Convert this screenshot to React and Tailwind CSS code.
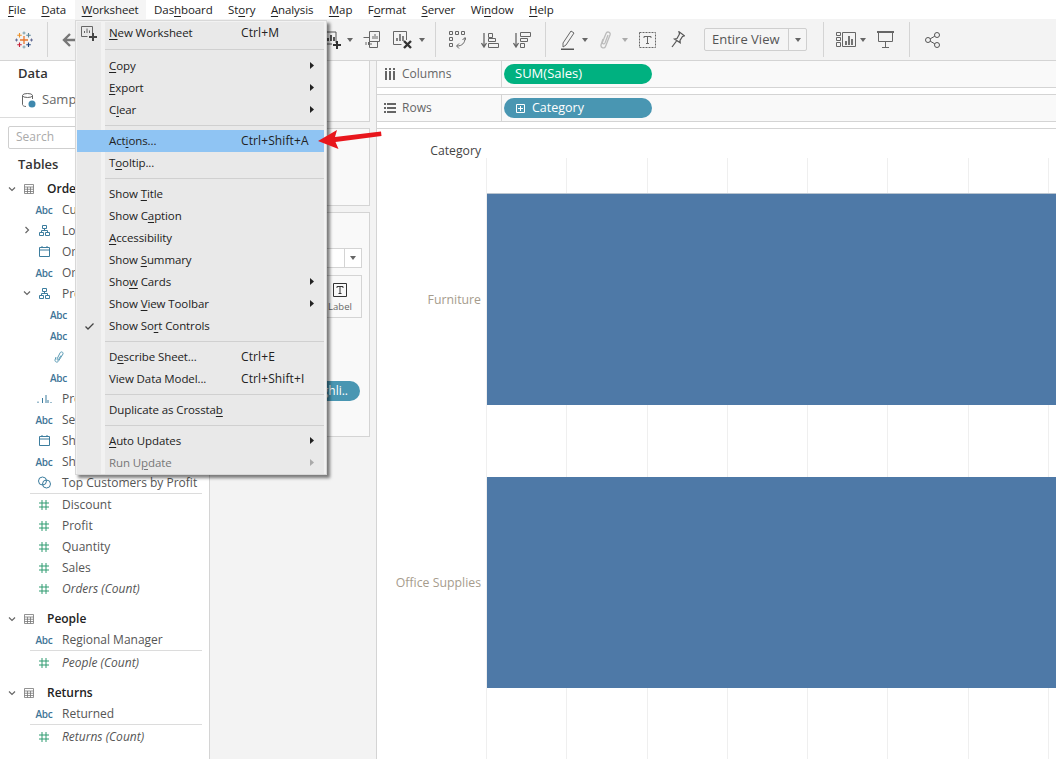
import React from 'react';

const menuBar = [
    ['F', 'ile'], ['D', 'ata'], ['W', 'orksheet'], ['Das', 'h', 'board'], ['St', 'o', 'ry'],
    ['A', 'nalysis'], ['M', 'ap'], ['F', 'o', 'rmat'], ['S', 'erver'], ['Wi', 'n', 'dow'], ['H', 'elp'],
];

// mnemonic text: [before, underlined, after]
const Mn = ({ a = '', u, b = '' }) => (
    <span>{a}<u className="underline-offset-2">{u}</u>{b}</span>
);

const Caret = ({ className }) => (
    <svg viewBox="0 0 6 4" className={`w-[6px] h-[4px] shrink-0 ${className}`}><path d="M0 0h6L3 4z" fill="#666" /></svg>
);

const Divider = ({ className }) => <div className={`w-px h-[35px] bg-[#d4d4d4] shrink-0 ${className}`} />;

const TableauLogo = () => (
    <svg viewBox="0 0 18 18" className="w-[18px] h-[18px] ml-[15px] shrink-0" fill="none" strokeWidth="1.1">
        <path d="M9 5v8M5 9h8" stroke="#e8762c" strokeWidth="1.3" />
        <path d="M13.5 2v4.500M11.250 4.250h4.500" stroke="#5b879b" />
        <path d="M4.500 2v4.500M2.250 4.250h4.500" stroke="#eb9129" />
        <path d="M4.500 11.500v4.500M2.250 13.750h4.500" stroke="#c72037" />
        <path d="M13.500 11.500v4.500M11.250 13.750h4.500" stroke="#1f457e" />
        <path d="M9 .5v3M7.500 2h3M9 14.500v3M7.500 16h3" stroke="#7099a6" strokeWidth="0.9" />
        <path d="M1.500 7.500v3M0 9h3M16.500 7.500v3M15 9h3" stroke="#5b6591" strokeWidth="0.9" />
    </svg>
);

const Toolbar = () => (
    <div className="h-[42px] bg-[#f3f3f3] border-b border-[#d4d4d4] flex items-center shrink-0">
        <TableauLogo />
        <Divider className="ml-[14px]" />
        <svg viewBox="0 0 14 14" className="w-[14px] h-[14px] ml-[14px] shrink-0" fill="none" stroke="#777" strokeWidth="2.4"><path d="M14 7H2M8 1L2 7l6 6" /></svg>
        <svg viewBox="0 0 18 18" className="w-[18px] h-[18px] ml-[247px] shrink-0" fill="none" stroke="#555"><path d="M13 12V1H1v12h8" /><path d="M5 10V7M8 10V4M11 10V6" strokeWidth="2" /><path d="M14 10v8M10 14h8" stroke="#333" strokeWidth="2" /></svg>
        <Caret className="ml-[6px]" />
        <svg viewBox="0 0 17 17" className="w-[17px] h-[17px] ml-[10px] shrink-0" fill="none" stroke="#666"><path d="M6.500.5h10v10h-10z" fill="#f3f3f3" /><path d="M10 8V5M12 8V3M14 8V5" /><path d="M.5 6.500h6v10h8v-6" /><path d="M3 14v-3M5.500 14v-3M8 14v-2" /></svg>
        <svg viewBox="0 0 19 18" className="w-[19px] h-[18px] ml-[13px] shrink-0" fill="none" stroke="#666"><path d="M13.500 9V.5H.5v13h8" /><path d="M4 10V7M7 10V3M10 10V5" strokeWidth="1.600" /><path d="M11 10l7 7M18 10l-7 7" stroke="#333" strokeWidth="2.400" /></svg>
        <Caret className="ml-[7px]" />
        <Divider className="ml-[10px]" />
        <svg viewBox="0 0 17 18" className="w-[17px] h-[18px] ml-[13px] shrink-0" fill="none" stroke="#666"><path d="M.5.5h3v3h-3zM6.500.5h3v3h-3zM12.500.5h3v3h-3zM.5 6.500h3v3h-3zM.5 12.500h3v3h-3z" /><path d="M16 7c0 5-3 8-8 8" /><path d="M10 12.500L7.500 15l2.500 2.500M13.500 9L16 6.500 17 9" /></svg>
        <svg viewBox="0 0 18 16" className="w-[18px] h-[16px] ml-[15px] shrink-0" fill="none" stroke="#666"><path d="M3 1v13M.5 11L3 15l2.500-4" strokeWidth="1.300" /><path d="M7.500 1.500h4v4h-4zM7.500 6.500h7v3h-7zM7.500 11.500h10v4h-10z" /></svg>
        <svg viewBox="0 0 18 16" className="w-[18px] h-[16px] ml-[14px] shrink-0" fill="none" stroke="#666"><path d="M3 1v13M.5 11L3 15l2.500-4" strokeWidth="1.300" /><path d="M7.500.5h10v4h-10zM7.500 6.500h7v3h-7zM7.500 11.500h4v4h-4z" /></svg>
        <Divider className="ml-[14px]" />
        <svg viewBox="0 0 16 20" className="w-[16px] h-[20px] ml-[15px] shrink-0" fill="none" stroke="#666"><path d="M2 13L10 1l3 2-8 12-3 2z" /><path d="M0 19.500h13" stroke="#555" strokeWidth="2" /></svg>
        <Caret className="ml-[5px]" />
        <svg viewBox="0 0 12 18" className="w-[12px] h-[18px] ml-[12px] shrink-0" fill="none" stroke="#bbb" strokeWidth="1.300"><path d="M3 8l-2 6c-.5 3 3.500 4 4.500 1.500L10 4c1-3-3-4-4-1.500L2.500 11c-.5 2 1.500 2.500 2.500 1l3-8" /></svg>
        <Caret className="ml-[10px] opacity-50" />
        <svg viewBox="0 0 17 16" className="w-[17px] h-[16px] ml-[11px] shrink-0" fill="none" stroke="#666"><path d="M.5.5h16v15H.5z" strokeDasharray="2 1" /><path d="M5 6V4.500h7V6M8.500 4.500v7M7 11.500h3" /></svg>
        <svg viewBox="0 0 14 17" className="w-[14px] h-[17px] ml-[15px] shrink-0" fill="none" stroke="#555" strokeWidth="1.200"><path d="M8 .8l5.500 4-2 .6-2.500 4 .2 2.400L3.500 8l2.500-.5L8.500 3z" /><path d="M5.500 10L1 16" /></svg>
        <div className="w-[103px] h-[23px] ml-[19px] flex border border-[#cfcfcf] rounded-[2px] bg-[#f5f5f5] shrink-0">
            <span className="flex-1 text-[13px] text-[#555] pl-[7px] leading-[21px]">Entire View</span>
            <span className="w-[18px] border-l border-[#cfcfcf] flex items-center justify-center"><Caret /></span>
        </div>
        <Divider className="ml-[16px]" />
        <svg viewBox="0 0 20 15" className="w-[20px] h-[15px] ml-[12px] shrink-0" fill="none" stroke="#666"><path d="M.5.5h4v3h-4zM.5 5.500h4v3h-4zM.5 10.500h4v4h-4zM6.500.5h13v14h-13z" /><path d="M10 13V9M13 13V4M16 13V7" strokeWidth="1.800" /></svg>
        <Caret className="ml-[4px]" />
        <svg viewBox="0 0 17 17" className="w-[17px] h-[17px] ml-[11px] shrink-0" fill="none" stroke="#666"><path d="M0 1h17" strokeWidth="2" /><path d="M1.500 1v9.500h14V1M8.500 10.500V16M5 16.500h7" /></svg>
        <Divider className="ml-[15px]" />
        <svg viewBox="0 0 15 16" className="w-[15px] h-[16px] ml-[15px] shrink-0" fill="none" stroke="#555"><circle cx="3" cy="8" r="2.500" /><circle cx="12" cy="3" r="2.500" /><circle cx="12" cy="13" r="2.500" /><path d="M5.200 6.800L9.800 4.200M5.200 9.200l4.600 2.600" /></svg>
    </div>
);

const TableIcon = () => (
    <svg viewBox="0 0 10 10" className="w-[10px] h-[10px] shrink-0" fill="none" stroke="#777"><path d="M.5.5h9v9h-9zM.5 3h9M.5 5.250h9M.5 7.500h9M3.500 3v6.500M6.500 3v6.500" strokeWidth="0.800" /></svg>
);

const Hierarchy = () => (
    <svg viewBox="0 0 11 11" className="w-[11px] h-[11px]" fill="none" stroke="#3c7d9e"><path d="M3.500.5h4v3h-4zM.5 7.500h4v3h-4zM6.500 7.500h4v3h-4zM5.500 3.500v2M2.500 7.500v-2h6v2" /></svg>
);

const Cal = () => (
    <svg viewBox="0 0 11 11" className="w-[11px] h-[11px]" fill="none" stroke="#3c7d9e"><path d="M.5 1.500h10v9H.5zM.5 4h10M3 0v2M8 0v2" /></svg>
);

const Clip = () => (
    <svg viewBox="0 0 10 12" className="w-[10px] h-[12px]" fill="none" stroke="#5b9bb5"><path d="M2 6L1 9c-.3 2 2.500 3 3.500 1L9 3C9.500 1 7 0 6 2L3 8c-.3 1 1 1.500 1.500.5l2.500-4" /></svg>
);

const BarsIcon = () => (
    <svg viewBox="0 0 15 8" className="w-[15px] h-[8px]" fill="none" stroke="#3c7d9e"><path d="M1 8V6.500M5.500 8V3M9 8V0M11 8V5M14 8V7" /></svg>
);

const SetIcon = () => (
    <svg viewBox="0 0 13 13" className="w-[13px] h-[13px]" fill="none" stroke="#3c7d9e"><circle cx="4.500" cy="5" r="4" /><circle cx="8.500" cy="8" r="4" /></svg>
);

const HashIcon = () => (
    <svg viewBox="0 0 10 10" className="w-[10px] h-[10px]" fill="none" stroke="#2e9b70"><path d="M3 0v10M7 0v10M0 3h10M0 7h10" /></svg>
);

const AbcTag = () => <span className="text-[10px] text-[#3f7597] font-semibold tracking-[-0.2px] leading-none">Abc</span>;

const Chevron = ({ right, className = '' }) => (
    <svg viewBox="0 0 8 8" className={`w-[8px] h-[8px] shrink-0 ${className}`} fill="none" stroke="#666" strokeWidth="1.200">
        <path d={right ? 'M2.500 1l3 3-3 3' : 'M1 2.500l3 3 3-3'} />
    </svg>
);

const Field = ({ icon, name, italic, deep, chevron }) => (
    <div className="h-[21px] flex items-center relative">
        {chevron && <div className="absolute top-[6px] left-[23px]">{chevron}</div>}
        <div className={`flex justify-center shrink-0 ${deep ? 'ml-[51px] w-[15px]' : 'ml-[36px] w-[16px]'}`}>{icon}</div>
        <span className={`ml-[10px] text-[12px] text-[#555] whitespace-nowrap ${italic ? 'italic' : ''}`}>{name}</span>
    </div>
);

const TableHead = ({ name, className = '' }) => (
    <div className={`h-[21px] flex items-center ${className}`}>
        <Chevron className="ml-[8px]" />
        <div className="ml-[8px]"><TableIcon /></div>
        <span className="ml-[13px] text-[12px] font-semibold text-[#222]">{name}</span>
    </div>
);

const Line = ({ className = '' }) => <div className={`h-px bg-[#dcdcdc] ml-[30px] mr-[7px] ${className}`} />;

const DataPanel = () => (
    <div className="w-[210px] shrink-0 bg-white border-r border-[#d4d4d4] overflow-hidden">
        <div className="pl-[18px] pt-[3px] h-[24px] text-[13px] font-semibold text-[#333] leading-[18px]">Data</div>
        <div className="flex items-center pl-[22px] h-[24px] mt-[3px] gap-[6px]">
            <svg viewBox="0 0 14 15" className="w-[14px] h-[15px] shrink-0" fill="none"><path d="M.5 2.500v9c0 1 1.500 2 3.500 2M10.500 2.500V6" stroke="#666" /><ellipse cx="5.500" cy="2.500" rx="5" ry="2" stroke="#666" /><circle cx="10" cy="11" r="3.500" fill="#3f88ad" /></svg>
            <span className="text-[13px] text-[#666] whitespace-nowrap">Sample - Superstore</span>
        </div>
        <div className="h-px bg-[#dcdcdc] mt-[5px]" />
        <div className="ml-[8px] mr-[8px] mt-[8px] h-[23px] border border-[#cfcfcf] rounded-[2px] pl-[7px] text-[12px] leading-[20px] text-[#aaa]">Search</div>
        <div className="pl-[18px] mt-[5px] h-[20px] text-[13px] font-semibold text-[#333] leading-[20px]">Tables</div>
        <TableHead name="Orders" className="mt-[4px]" />
        <Field icon={<AbcTag />} name="Customer Name" />
        <Field icon={<Hierarchy />} name="Location" chevron={<Chevron right />} />
        <Field icon={<Cal />} name="Order Date" />
        <Field icon={<AbcTag />} name="Order ID" />
        <Field icon={<Hierarchy />} name="Product" chevron={<Chevron />} />
        <Field deep icon={<AbcTag />} name="Category" />
        <Field deep icon={<AbcTag />} name="Sub-Category" />
        <Field deep icon={<Clip />} name="Manufacturer" />
        <Field deep icon={<AbcTag />} name="Product Name" />
        <Field icon={<BarsIcon />} name="Profit Ratio" />
        <Field icon={<AbcTag />} name="Segment" />
        <Field icon={<Cal />} name="Ship Date" />
        <Field icon={<AbcTag />} name="Ship Mode" />
        <Field icon={<SetIcon />} name="Top Customers by Profit" />
        <Line />
        <Field icon={<HashIcon />} name="Discount" />
        <Field icon={<HashIcon />} name="Profit" />
        <Field icon={<HashIcon />} name="Quantity" />
        <Field icon={<HashIcon />} name="Sales" />
        <Field italic icon={<HashIcon />} name="Orders (Count)" />
        <TableHead name="People" className="mt-[9px]" />
        <Field icon={<AbcTag />} name="Regional Manager" />
        <Line className="mb-px" />
        <Field italic icon={<HashIcon />} name="People (Count)" />
        <TableHead name="Returns" className="mt-[9px]" />
        <Field icon={<AbcTag />} name="Returned" />
        <Line className="mb-px" />
        <Field italic icon={<HashIcon />} name="Returns (Count)" />
    </div>
);

const Card = ({ className, children }) => (
    <div className={`ml-[8px] mr-[6px] bg-[#f9f9f9] border border-[#d4d4d4] ${className}`}>{children}</div>
);

const MiddlePanel = () => (
    <div className="w-[167px] shrink-0 bg-[#f3f3f3] border-r border-[#d4d4d4]">
        <Card className="h-[61px] border-t-0"><div className="p-2 text-xs text-[#555]">Pages</div></Card>
        <Card className="h-[78px] mt-[6px]"><div className="p-2 text-xs text-[#555]">Filters</div></Card>
        <Card className="h-[225px] mt-[6px] px-[7px] pt-[35px]">
            <div className="h-[20px] bg-white border border-[#d4d4d4] flex justify-end">
                <span className="w-[17px] border-l border-[#d4d4d4] flex items-center justify-center"><Caret /></span>
            </div>
            <div className="h-[43px] mt-[7px] bg-[#f9f9f9] border border-[#d4d4d4] flex justify-end">
                <div className="w-[42px] flex flex-col items-center pt-[7px]">
                    <svg viewBox="0 0 14 14" className="w-[14px] h-[14px]" fill="none" stroke="#333"><path d="M.5.5h13v13H.5z" /><path d="M4 5V3.500h6V5M7 3.500v7M5.500 10.500h3" /></svg>
                    <span className="text-[9.500px] text-[#666] leading-[14px] mt-[3px]">Label</span>
                </div>
            </div>
            <div className="h-[20px] mt-[63px] bg-[#4996b2] rounded-full ml-[8px] mr-[2px] text-[12px] text-white leading-[20px] text-right pr-[12px]">Highli..</div>
        </Card>
    </div>
);

const Shelf = ({ icon, label, pill, pillClass, className, plus }) => (
    <div className={`bg-[#f9f9f9] flex items-stretch border-b border-[#d4d4d4] ${className}`}>
        <div className="w-[125px] flex items-center border-r border-[#d4d4d4] text-[12px] text-[#666]">
            <div className="w-[25px] flex justify-center">{icon}</div>
            {label}
        </div>
        <div className="flex items-center pl-[2px]">
            <div className={`w-[148px] h-[20px] rounded-full flex items-center text-white ${pillClass}`}>
                {plus && <svg viewBox="0 0 9 9" className="w-[9px] h-[9px] ml-[12px] mr-[7px]" fill="none" stroke="#fff"><path d="M.5.5h8v8h-8zM4.500 2v5M2 4.500h5" /></svg>}
                <span className={plus ? 'text-[12.500px]' : 'ml-[11px] text-[13px]'}>{pill}</span>
            </div>
        </div>
    </div>
);

const ChartArea = () => (
    <div className="flex-1 bg-white border-t border-[#d4d4d4] mt-[6px] min-h-0 overflow-hidden">
        <div className="h-[29px] w-[104px] flex items-end justify-end text-[12.200px] font-medium text-[#444] leading-[15px]">Category</div>
        <div className="flex">
            <div className="w-[110px] shrink-0 pt-[36px] text-[12.300px] text-[#a69c8d]">
                <div className="h-[212px] flex items-center justify-end pr-[6px]">Furniture</div>
                <div className="h-[212px] mt-[71px] flex items-center justify-end pr-[6px]">Office Supplies</div>
            </div>
            <div className="flex-1 relative h-[601px]">
                <div className="absolute inset-y-0 -left-px flex">
                    {[0, 1, 2, 3, 4, 5, 6, 7].map((i) => (
                        <div key={i} className="w-[80.300px] shrink-0 border-l border-[#efefef]" />
                    ))}
                </div>
                <div className="relative pt-[35px]">
                    <div className="h-[212px] bg-[#4e79a7] border-t border-[#b9c4cf]" />
                    <div className="h-[211px] mt-[72px] bg-[#4e79a7]" />
                </div>
            </div>
        </div>
    </div>
);

const ItemRow = ({ children, shortcut, arrow, active, disabled, check, icon }) => (
    <div className={`h-[22px] flex text-[11.500px] tracking-[-0.1px] leading-[22px] ${active ? 'bg-[#8fc4f3] text-[#111]' : ''} ${disabled ? 'text-[#777]' : 'text-[#222]'}`}>
        <div className={`w-[24px] shrink-0 flex items-center justify-center ${active ? '' : 'bg-[#e9e9e9]'}`}>{check}{icon}</div>
        <div className="w-[4px] shrink-0" />
        <div className={`flex-1 flex pl-[4px] relative ${active ? '' : 'bg-[#e9e9e9]'}`}>
            <div className="w-[132px] whitespace-nowrap">{children}</div>
            <div className="whitespace-nowrap text-[12px] tracking-[0.1px]">{shortcut}</div>
            {arrow && (
                <svg viewBox="0 0 4 7" className="w-[4px] h-[7px] absolute right-[10px] top-[7px]"><path d="M0 0l4 3.500L0 7z" fill={disabled ? '#aaa' : '#222'} /></svg>
            )}
        </div>
    </div>
);

const Sep = ({ className = 'h-[9px]' }) => (
    <div className={`flex ${className}`}>
        <div className="w-[24px] shrink-0 bg-[#e9e9e9]" />
        <div className="w-[4px] shrink-0" />
        <div className="flex-1 bg-[#e9e9e9] flex items-center"><div className="w-full h-px bg-[#d0d0d0]" /></div>
    </div>
);

const WorksheetMenu = () => (
    <div className="absolute left-[75px] top-[20px] w-[252px] h-[455px] bg-[#f2f2f2] border border-[#d8d8d8] p-px pr-[2px] shadow-[3px_3px_3px_rgba(0,0,0,0.5)]">
        <ItemRow shortcut="Ctrl+M" icon={
            <svg viewBox="0 0 16 16" className="w-[16px] h-[16px]" fill="none" stroke="#666"><path d="M11.500 8V1.500H.5v10h6" /><path d="M3.500 8V6M6 8V3.500M8.500 8V5.500" /><path d="M12 8v8M8 12h8" stroke="#444" strokeWidth="2" /></svg>
        }><Mn u="N" b="ew Worksheet" /></ItemRow>
        <Sep className="h-[11px]" />
        <ItemRow arrow><Mn u="C" b="opy" /></ItemRow>
        <ItemRow arrow><Mn u="E" b="xport" /></ItemRow>
        <ItemRow arrow><Mn a="C" u="l" b="ear" /></ItemRow>
        <Sep />
        <ItemRow active shortcut="Ctrl+Shift+A"><Mn a="Act" u="i" b="ons..." /></ItemRow>
        <ItemRow><Mn a="T" u="o" b="oltip..." /></ItemRow>
        <Sep />
        <ItemRow><Mn a="Show " u="T" b="itle" /></ItemRow>
        <ItemRow><Mn a="Show C" u="a" b="ption" /></ItemRow>
        <ItemRow><Mn u="A" b="ccessibility" /></ItemRow>
        <ItemRow><Mn a="Show " u="S" b="ummary" /></ItemRow>
        <ItemRow arrow><Mn a="Sho" u="w" b=" Cards" /></ItemRow>
        <ItemRow arrow><Mn a="Show " u="V" b="iew Toolbar" /></ItemRow>
        <ItemRow check={
            <svg viewBox="0 0 9 7" className="w-[9px] h-[7px]" fill="none" stroke="#444" strokeWidth="1.300"><path d="M.5 3.500l2.500 2.500L8.500.5" /></svg>
        }><Mn a="Show So" u="r" b="t Controls" /></ItemRow>
        <Sep />
        <ItemRow shortcut="Ctrl+E"><Mn a="D" u="e" b="scribe Sheet..." /></ItemRow>
        <ItemRow shortcut="Ctrl+Shift+I">View Data Model...</ItemRow>
        <Sep />
        <ItemRow><Mn a="Duplicate as Crossta" u="b" /></ItemRow>
        <Sep />
        <ItemRow arrow><Mn u="A" b="uto Updates" /></ItemRow>
        <ItemRow arrow disabled><Mn a="Run U" u="p" b="date" /></ItemRow>
    </div>
);

export default function App() {
    return (
        <div className="relative w-[1056px] h-[759px] overflow-hidden bg-white flex flex-col font-['Open_Sans',sans-serif]">
            <div className="h-[19px] flex shrink-0 text-[11.500px] tracking-[-0.1px] leading-[19px] text-[#222] gap-[15.500px] pl-[8px] bg-white">
                {menuBar.map((m, i) => {
                    const text = m.length === 2
                        ? <Mn u={m[0]} b={m[1]} />
                        : <Mn a={m[0]} u={m[1]} b={m[2]} />;
                    return (
                        <span key={i} className={`whitespace-nowrap ${i === 2 ? 'bg-[#f5f5f5] -mx-[7px] px-[7px]' : ''}`}>{text}</span>
                    );
                })}
            </div>
            <Toolbar />
            <div className="flex flex-1 min-h-0">
                <DataPanel />
                <MiddlePanel />
                <div className="flex-1 flex flex-col min-w-0">
                    <Shelf
                        label="Columns"
                        pill="SUM(Sales)"
                        pillClass="bg-[#00b180]"
                        className="h-[27px]"
                        icon={<svg viewBox="0 0 10 12" className="w-[10px] h-[12px]" fill="#666"><path d="M0 3h2v9H0zM4 3h2v9H4zM8 3h2v9H8z" /><path d="M0 0h2v2H0zM4 0h2v2H4zM8 0h2v2H8z" /></svg>}
                    />
                    <Shelf
                        plus
                        label="Rows"
                        pill="Category"
                        pillClass="bg-[#4996b2]"
                        className="h-[28px] mt-[6px] border-t"
                        icon={<svg viewBox="0 0 12 10" className="w-[12px] h-[10px]" fill="#666"><path d="M0 0h2v2H0zM0 4h2v2H0zM0 8h2v2H0zM3 0h9v2H3zM3 4h9v2H3zM3 8h9v2H3z" /></svg>}
                    />
                    <ChartArea />
                </div>
            </div>
            <WorksheetMenu />
            <svg viewBox="0 0 66 20" className="absolute left-[317px] top-[129px] w-[66px] h-[20px]">
                <path d="M1 12L20 1l-2 7 46-5.500.5 4.500-46 6 3 7z" fill="#e8161c" />
            </svg>
        </div>
    );
}
